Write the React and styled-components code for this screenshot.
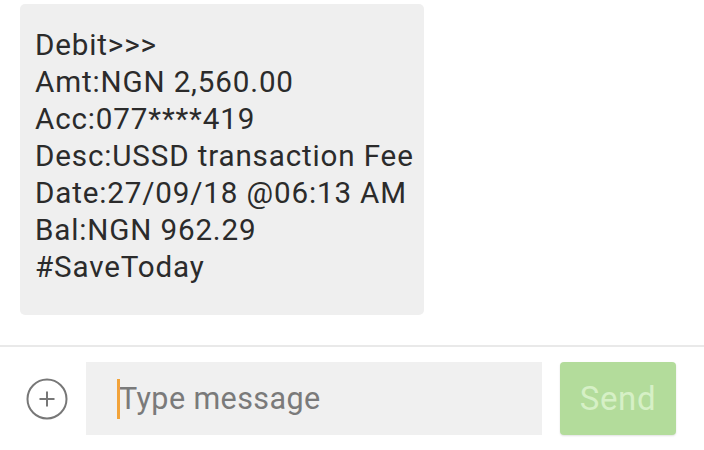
import React from "react";
import styled, { createGlobalStyle } from "styled-components";

const GlobalStyle = createGlobalStyle`
  html, body {
    margin: 0;
    padding: 0;
    background: #fff;
    font-family: Roboto, "Liberation Sans", sans-serif;
  }
`;

// layout

const Screen = styled.div`
  width: 704px;
  height: 450px;
  display: flex;
  flex-direction: column;
  overflow: hidden;
`;

const Thread = styled.div`
  flex: 1;
  padding: 4px 0 0 20px;
`;

const Bubble = styled.div`
  width: 404px;
  box-sizing: border-box;
  padding: 23px 4px 29px 15px;
  background: #efefef;
  border-radius: 5px;
  color: #2b2b2b;
  font-size: 29.6px;
  letter-spacing: 0.85px;
  line-height: 37px;
  white-space: pre-line;
`;

const Composer = styled.div`
  border-top: 2px solid #e9e9e9;
  height: 105px;
  box-sizing: border-box;
  display: flex;
  align-items: center;
  padding: 0 28px 0 26px;
`;

const AttachButton = styled.button`
  width: 42px;
  height: 42px;
  padding: 0;
  border: none;
  background: none;
  display: flex;
  align-items: center;
  justify-content: center;
  margin-right: 18px;
`;

const InputBox = styled.div`
  flex: 1;
  height: 73px;
  background: #f0f0f0;
  display: flex;
  align-items: center;
  padding-left: 31px;
  box-sizing: border-box;
  margin-right: 18px;
`;

const Caret = styled.span`
  display: inline-block;
  width: 3px;
  height: 40px;
  background: #f2a33a;
  margin-right: -1px;
`;

const Placeholder = styled.span`
  font-size: 30.5px;
  letter-spacing: 0.4px;
  color: #7a7a7a;
`;

const SendButton = styled.button`
  width: 116px;
  height: 73px;
  border: none;
  border-radius: 4px;
  background: #b3dc9b;
  color: #d6f0c6;
  font-family: Roboto, "Liberation Sans", sans-serif;
  font-size: 33px;
  letter-spacing: 0.6px;
  box-shadow: 0 1px 2px rgba(0, 0, 0, 0.12);
  margin-bottom: 1px;
`;

const lines = [
  "Debit>>>",
  "Amt:NGN 2,560.00",
  "Acc:077****419",
  "Desc:USSD transaction Fee",
  "Date:27/09/18 @06:13 AM",
  "Bal:NGN 962.29",
  "#SaveToday",
];

const PlusIcon = () => (
  <svg width="42" height="42" viewBox="0 0 42 42">
    <circle cx="21" cy="21" r="19.5" fill="none" stroke="#777" strokeWidth="2" />
    <path d="M21 13.5v15M13.5 21h15" stroke="#777" strokeWidth="2" />
  </svg>
);

export default function App() {
  return (
    <Screen>
      <GlobalStyle />
      <Thread>
        <Bubble>{lines.join("\n")}</Bubble>
      </Thread>
      <Composer>
        <AttachButton aria-label="attach">
          <PlusIcon />
        </AttachButton>
        <InputBox>
          <Caret />
          <Placeholder>Type message</Placeholder>
        </InputBox>
        <SendButton>Send</SendButton>
      </Composer>
    </Screen>
  );
}
